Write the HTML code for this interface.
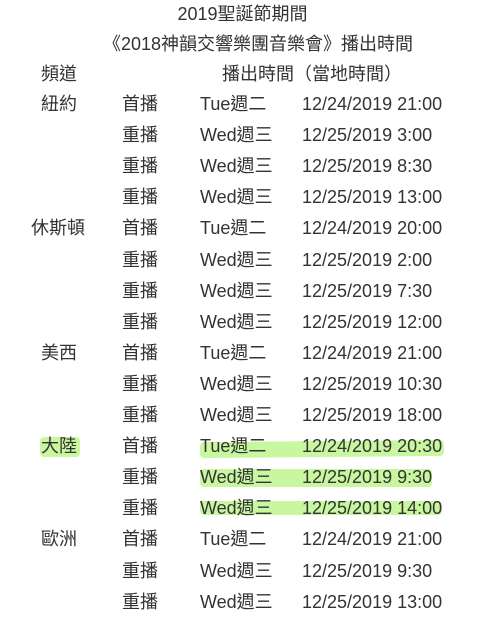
<!DOCTYPE html>
<html><head><meta charset="utf-8"><style>
body{margin:0;background:#fff;width:485px;height:641px;overflow:hidden;position:relative;font-family:"Liberation Sans","Noto Sans CJK TC",sans-serif;font-size:18px;color:#333;}
.t{position:absolute;white-space:nowrap;line-height:22px;}
.h{position:absolute;background:#c8f7a0;border-radius:4px;}
</style></head><body>
<div class="h" style="left:40px;top:437px;width:40px;height:20px;"></div>
<div class="h" style="left:200px;top:441px;width:244px;height:16px;transform:rotate(-0.5deg)"></div>
<div class="h" style="left:200px;top:469px;width:232px;height:18px;"></div>
<div class="h" style="left:200px;top:501px;width:242px;height:14px;"></div>
<div class="t" style="left:0;width:485px;text-align:center;top:3px;">2019聖誕節期間</div>
<div class="t" style="left:103px;top:33px;">《2018神韻交響樂團音樂會》播出時間</div>
<div class="t" style="left:41px;top:63px;">頻道</div>
<div class="t" style="left:222px;top:63px;">播出時間（當地時間）</div>
<div id="rows"></div>
<script>
var d=[["紐約","首播","Tue週二","12/24/2019 21:00"],["","重播","Wed週三","12/25/2019 3:00"],["","重播","Wed週三","12/25/2019 8:30"],["","重播","Wed週三","12/25/2019 13:00"],
["休斯頓","首播","Tue週二","12/24/2019 20:00"],["","重播","Wed週三","12/25/2019 2:00"],["","重播","Wed週三","12/25/2019 7:30"],["","重播","Wed週三","12/25/2019 12:00"],
["美西","首播","Tue週二","12/24/2019 21:00"],["","重播","Wed週三","12/25/2019 10:30"],["","重播","Wed週三","12/25/2019 18:00"],
["大陸","首播","Tue週二","12/24/2019 20:30"],["","重播","Wed週三","12/25/2019 9:30"],["","重播","Wed週三","12/25/2019 14:00"],
["歐洲","首播","Tue週二","12/24/2019 21:00"],["","重播","Wed週三","12/25/2019 9:30"],["","重播","Wed週三","12/25/2019 13:00"]];
var h="";d.forEach(function(r,i){var y=Math.round(93+i*31.1);
var cx=r[0].length==3?31:41;
h+='<div class="t" style="left:'+cx+'px;top:'+y+'px">'+r[0]+'</div><div class="t" style="left:122px;top:'+y+'px">'+r[1]+'</div><div class="t" style="left:200px;top:'+y+'px">'+r[2]+'</div><div class="t" style="left:302px;top:'+y+'px">'+r[3]+'</div>';});
document.getElementById("rows").innerHTML=h;
</script>
</body></html>
